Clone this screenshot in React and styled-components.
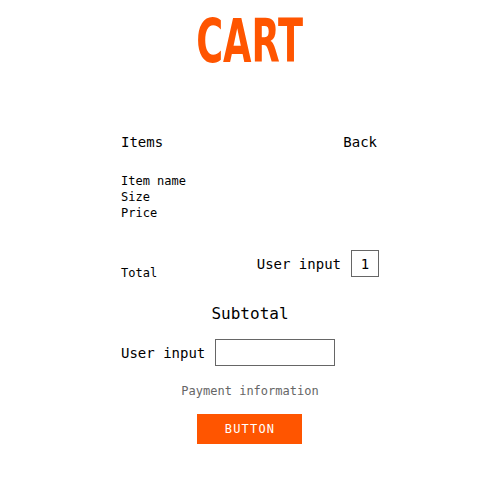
import React from "react";
import styled, { createGlobalStyle } from "styled-components";

const Global = createGlobalStyle`
  html, body { margin: 0; padding: 0; background: #fff; }
  body { font-family: "DejaVu Sans Mono", "Liberation Mono", monospace; color: #000; }
`;

const Page = styled.div`
  display: flex;
  flex-direction: column;
  align-items: center;
  padding-top: 11px;
`;

const Title = styled.h1`
  margin: 0;
  height: 60px;
  font-family: "Liberation Sans Narrow", "DejaVu Sans Condensed", "Liberation Sans", sans-serif;
  font-weight: 700;
  font-size: 60px;
  line-height: 60px;
  color: #ff5500;
  transform: scaleX(0.68);
`;

const Panel = styled.div`
  width: 258px;
  margin-top: 61px;
  display: flex;
  flex-direction: column;
`;

const HeaderRow = styled.div`
  display: flex;
  justify-content: space-between;
  font-size: 14px;
  line-height: 20px;
  padding: 0 2px 0 0;
`;

const Details = styled.div`
  margin-top: 21px;
  font-size: 12px;
  line-height: 16px;
`;

const TotalRow = styled.div`
  margin-top: 29px;
  display: flex;
  justify-content: space-between;
  align-items: flex-end;
`;

const TotalLabel = styled.span`
  font-size: 12px;
  line-height: 16px;
  margin-bottom: -4px;
`;

const Field = styled.div`
  display: flex;
  align-items: center;
  gap: 10px;
  font-size: 14px;
  line-height: 20px;
`;

const Box = styled.div`
  box-sizing: border-box;
  width: ${(p) => p.$w}px;
  height: 27px;
  border: 1px solid #666;
  display: flex;
  align-items: center;
  justify-content: center;
  font-size: 14px;
`;

const Subtotal = styled.div`
  margin-top: 27px;
  text-align: center;
  font-size: 16px;
  line-height: 20px;
`;

const InputRow = styled(Field)`
  margin-top: 15px;
`;

const Payment = styled.div`
  margin-top: 17px;
  text-align: center;
  font-size: 12px;
  line-height: 16px;
  color: #666;
`;

const Button = styled.button`
  align-self: center;
  margin-top: 15px;
  margin-left: -1px;
  width: 105px;
  height: 30px;
  border: none;
  background: #ff5500;
  color: #fff;
  font-family: "DejaVu Sans Mono", monospace;
  font-size: 12px;
  letter-spacing: 1.2px;
  padding: 0 0 0 1px;
`;

export default function App() {
  return (
    <>
      <Global />
      <Page>
        <Title>CART</Title>
        <Panel>
          <HeaderRow>
            <span>Items</span>
            <span>Back</span>
          </HeaderRow>
          <Details>
            <div>Item name</div>
            <div>Size</div>
            <div>Price</div>
          </Details>
          <TotalRow>
            <TotalLabel>Total</TotalLabel>
            <Field>
              <span>User input</span>
              <Box $w={28}>1</Box>
            </Field>
          </TotalRow>
          <Subtotal>Subtotal</Subtotal>
          <InputRow>
            <span>User input</span>
            <Box $w={120} />
          </InputRow>
          <Payment>Payment information</Payment>
          <Button>BUTTON</Button>
        </Panel>
      </Page>
    </>
  );
}
